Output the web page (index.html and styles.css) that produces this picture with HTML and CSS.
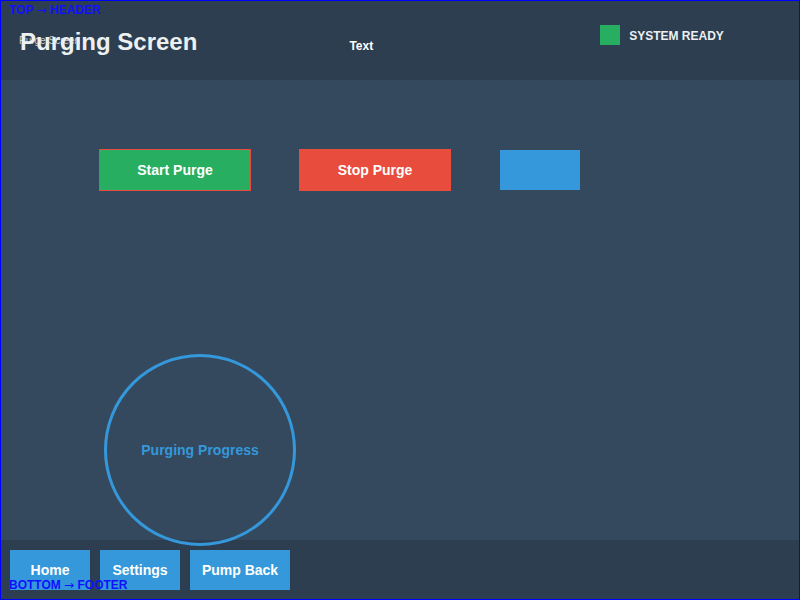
FILE: index.html
```html
<!DOCTYPE html>
<html>
<head>
<meta charset="utf-8">
<link rel="stylesheet" href="styles.css">
</head>
<body>
<div class="screen">
  <header class="header">
    <span class="sublabel">Purge Screen</span>
    <h1 class="title">Purging Screen</h1>
    <span class="text-label">Text</span>
    <div class="status">
      <span class="status-dot"></span>
      <span class="status-text">SYSTEM READY</span>
    </div>
  </header>
  <main class="main">
    <div class="actions">
      <button class="btn btn-start">Start Purge</button>
      <button class="btn btn-stop">Stop Purge</button>
      <button class="btn btn-blank"></button>
    </div>
    <div class="progress">Purging Progress</div>
  </main>
  <footer class="footer">
    <button class="nav nav-home">Home</button>
    <button class="nav nav-settings">Settings</button>
    <button class="nav nav-pump">Pump Back</button>
  </footer>
  <span class="marker marker-top">TOP <span class="arrow">→</span> HEADER</span>
  <span class="marker marker-bottom">BOTTOM <span class="arrow">→</span> FOOTER</span>
  <div class="frame"></div>
</div>
</body>
</html>
```
FILE: styles.css
```css
* { box-sizing: border-box; }
html, body { margin: 0; padding: 0; }
body {
  width: 800px;
  height: 600px;
  overflow: hidden;
  font-family: "Liberation Sans", Arial, sans-serif;
  background: #34495e;
}
.screen {
  position: relative;
  width: 800px;
  height: 600px;
  display: flex;
  flex-direction: column;
}
.header {
  position: relative;
  height: 80px;
  flex: 0 0 80px;
  background: #2c3e50;
  display: flex;
  align-items: flex-start;
  padding-left: 20px;
}
.sublabel {
  position: absolute;
  left: 19px;
  top: 35px;
  font-size: 10px;
  line-height: 12px;
  color: #c8cdd2;
}
.title {
  position: relative;
  margin: 28px 0 0 0;
  font-size: 24px;
  line-height: 28px;
  font-weight: bold;
  color: #ecf0f1;
}
.text-label {
  margin: 39px 0 0 152px;
  font-size: 12px;
  line-height: 14px;
  font-weight: bold;
  color: #ffffff;
}
.status {
  margin: 25px 0 0 227px;
  display: flex;
  align-items: center;
  gap: 9px;
}
.status-dot {
  flex: 0 0 20px;
  width: 20px;
  height: 20px;
  background: #27ae60;
}
.status-text {
  padding-top: 2px;
  font-size: 12px;
  line-height: 14px;
  font-weight: bold;
  color: #ecf0f1;
}
.main {
  height: 460px;
  flex: 0 0 460px;
  background: #34495e;
  display: flex;
  flex-direction: column;
  align-items: flex-start;
}
.actions {
  flex-shrink: 0;
  margin: 69px 0 0 99px;
  display: flex;
  align-items: center;
}
.btn {
  font-family: "Liberation Sans", Arial, sans-serif;
  font-size: 14px;
  font-weight: bold;
  color: #ffffff;
  padding: 0;
  margin: 0;
  cursor: pointer;
}
.btn-start {
  width: 152px;
  height: 42px;
  background: #27ae60;
  border: 1px solid #e74c3c;
}
.btn-stop {
  width: 152px;
  height: 42px;
  margin-left: 48px;
  background: #e74c3c;
  border: 1px solid #e74c3c;
}
.btn-blank {
  width: 80px;
  height: 40px;
  margin-left: 49px;
  background: #3498db;
  border: none;
}
.progress {
  position: relative;
  z-index: 2;
  flex-shrink: 0;
  margin: 163px 0 0 104px;
  width: 192px;
  height: 192px;
  border: 3px solid #3498db;
  border-radius: 50%;
  display: flex;
  align-items: center;
  justify-content: center;
  font-size: 14px;
  font-weight: bold;
  color: #3498db;
}
.footer {
  height: 60px;
  flex: 0 0 60px;
  background: #2c3e50;
  display: flex;
  align-items: center;
  gap: 10px;
  padding: 0 10px;
}
.nav {
  height: 40px;
  background: #3498db;
  border: none;
  padding: 0;
  margin: 0;
  font-family: "Liberation Sans", Arial, sans-serif;
  font-size: 14px;
  font-weight: bold;
  color: #ffffff;
}
.nav-home, .nav-settings { width: 80px; }
.nav-pump { width: 100px; }
.marker {
  position: absolute;
  left: 9px;
  z-index: 5;
  font-size: 12px;
  line-height: 14px;
  font-weight: bold;
  color: #1010ff;
}
.arrow {
  font-family: "DejaVu Sans", sans-serif;
  font-weight: normal;
}
.marker-top { top: 3px; }
.marker-bottom { top: 578px; }
.frame {
  position: absolute;
  inset: 0;
  z-index: 6;
  border: 1px solid #0000ff;
  pointer-events: none;
}
```
